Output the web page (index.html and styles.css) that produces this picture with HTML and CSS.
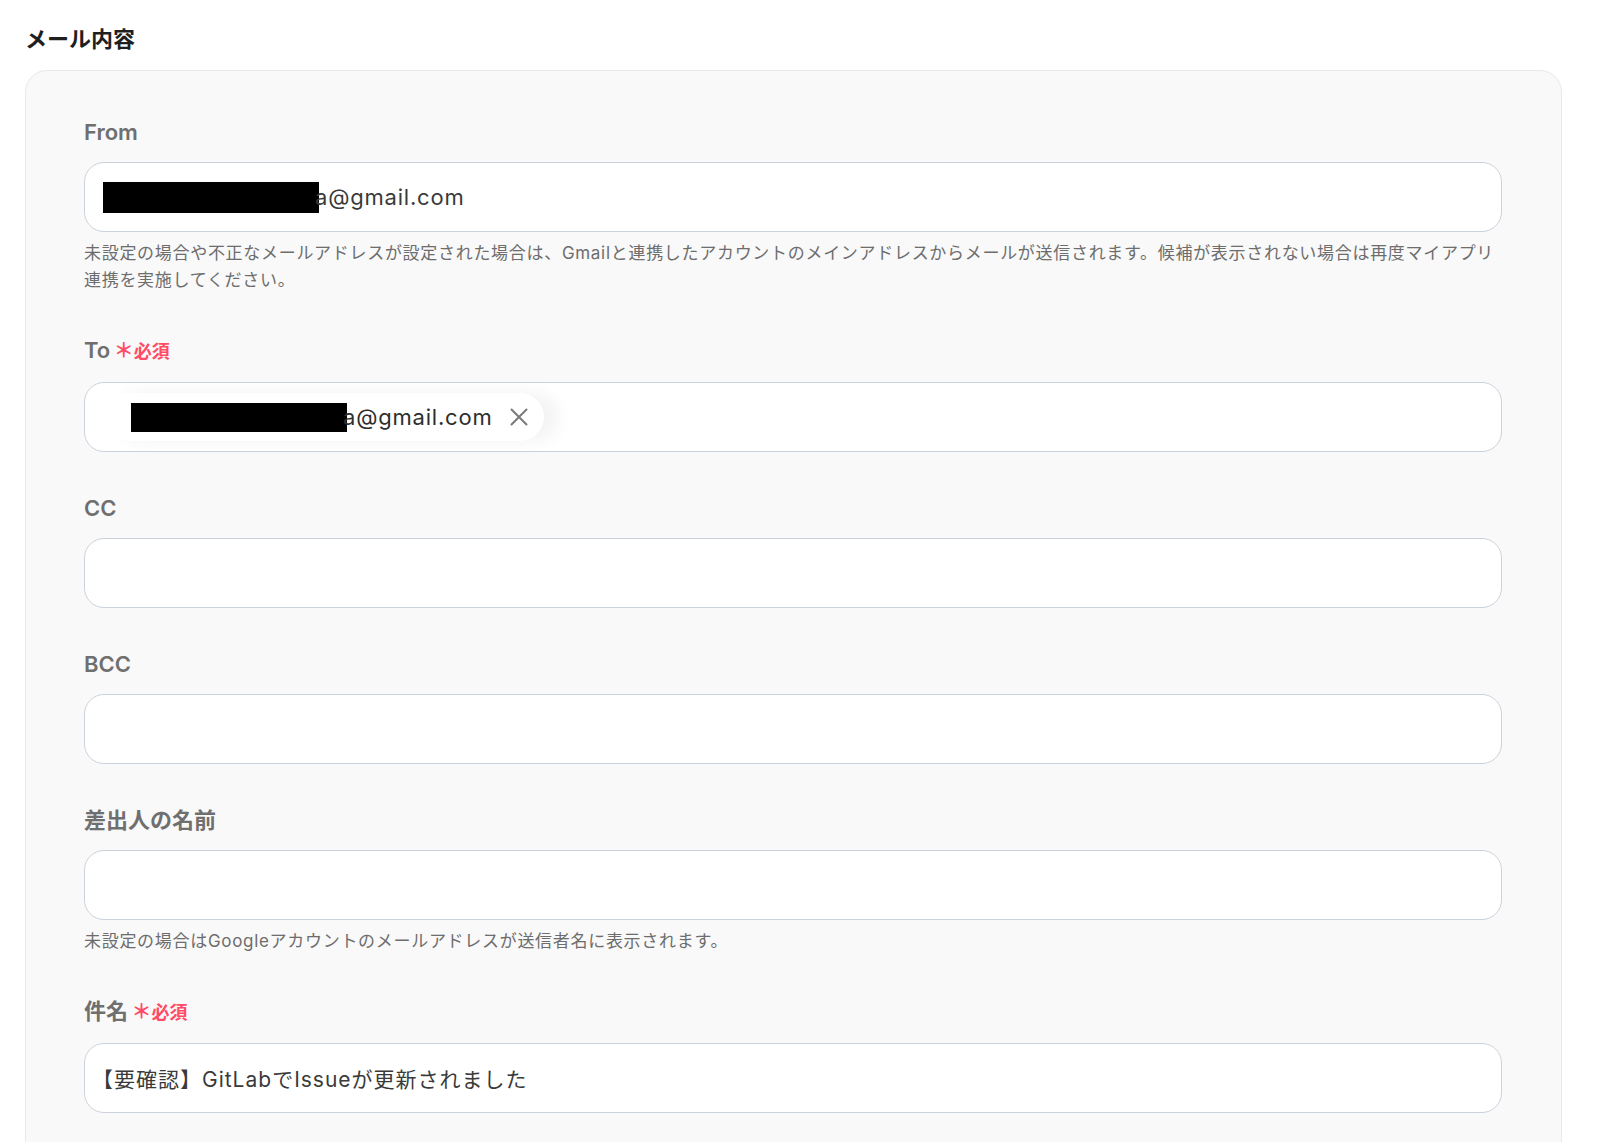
FILE: index.html
```html
<!DOCTYPE html>
<html lang="ja">
<head>
  <meta charset="UTF-8">
  <meta name="viewport" content="width=device-width, initial-scale=1.0">
  <title>メール内容</title>
  <link rel="stylesheet" href="styles.css">
</head>
<body>
  <div class="page">
    <h2 class="section-title">メール内容</h2>

    <div class="mail-card">
      <div class="field">
        <label class="field-label">From</label>
        <div class="text-box">
          <span class="redacted redacted-from"></span><span class="value value-from">a@gmail.com</span>
        </div>
        <p class="help">未設定の場合や不正なメールアドレスが設定された場合は、Gmailと連携したアカウントのメインアドレスからメールが送信されます。候補が表示されない場合は再度マイアプリ連携を実施してください。</p>
      </div>

      <div class="field">
        <label class="field-label">To <span class="required"><span class="asterisk">＊</span>必須</span></label>
        <div class="text-box chip-box">
          <span class="chip">
            <span class="redacted redacted-chip"></span><span class="chip-text">a@gmail.com</span>
            <svg class="chip-close" width="18" height="18" viewBox="0 0 18 18" aria-hidden="true">
              <path d="M1.5 1.5L16.5 16.5M16.5 1.5L1.5 16.5" stroke="#7a7a7a" stroke-width="2" stroke-linecap="round"/>
            </svg>
          </span>
        </div>
      </div>

      <div class="field">
        <label class="field-label">CC</label>
        <div class="text-box"></div>
      </div>

      <div class="field">
        <label class="field-label">BCC</label>
        <div class="text-box"></div>
      </div>

      <div class="field">
        <label class="field-label">差出人の名前</label>
        <div class="text-box"></div>
        <p class="help">未設定の場合はGoogleアカウントのメールアドレスが送信者名に表示されます。</p>
      </div>

      <div class="field">
        <label class="field-label">件名 <span class="required"><span class="asterisk">＊</span>必須</span></label>
        <div class="text-box">
          <span class="value value-subject">【要確認】GitLabでIssueが更新されました</span>
        </div>
      </div>
    </div>
  </div>
</body>
</html>
```

FILE: styles.css
```css
* {
  box-sizing: border-box;
}
html, body {
  margin: 0;
  padding: 0;
  background-color: #ffffff;
}
body {
  font-family: Inter, "Noto Sans CJK JP", sans-serif;
  color: #222;
}
.page {
  padding: 24px 38px 0 25px;
}
.section-title {
  margin: 0 0 16px 0;
  font-size: 22px;
  line-height: 30px;
  font-weight: 600;
  color: #1f1f1f;
}
.mail-card {
  background-color: #f9f9f9;
  border: 1px solid #e9e9e9;
  border-radius: 22px;
  padding: 49px 59px 40px 58px;
}
.field {
  margin-bottom: 44px;
}
.field-label {
  display: block;
  font-size: 22px;
  line-height: 24px;
  font-weight: 600;
  color: #6f6f6f;
  margin-bottom: 18px;
}
.required {
  color: #ff4b66;
  font-size: 18px;
  font-weight: 600;
}
.asterisk {
  font-size: 20px;
  margin-left: -2px;
}
.text-box {
  display: flex;
  align-items: center;
  height: 70px;
  background-color: #fff;
  border: 1px solid #ccd3dd;
  border-radius: 20px;
  padding: 0 18px;
}
.redacted {
  display: inline-block;
  background-color: #000;
}
.redacted-from {
  width: 216px;
  height: 31px;
}
.value {
  font-size: 22px;
  letter-spacing: 0.8px;
  color: #3a3a3a;
}
.value-from {
  margin-left: -4px;
}
.value-subject {
  margin-left: -11px;
  font-size: 21px;
  letter-spacing: 1px;
}
.help {
  margin: 8px 0 0 0;
  font-size: 17px;
  line-height: 27px;
  letter-spacing: 0.7px;
  color: #6d6d6d;
}
.chip-box {
  padding: 0 18px;
}
.chip {
  display: inline-flex;
  align-items: center;
  height: 48px;
  padding: 0 16px 0 28px;
  background-color: #fff;
  border-radius: 24px;
  box-shadow: 14px 0 18px rgba(0, 0, 0, 0.05);
}
.redacted-chip {
  width: 216px;
  height: 29px;
}
.chip-text {
  font-size: 22px;
  letter-spacing: 0.8px;
  color: #2e2e2e;
  margin-left: -4px;
}
.chip-close {
  margin-left: 17px;
}
```
